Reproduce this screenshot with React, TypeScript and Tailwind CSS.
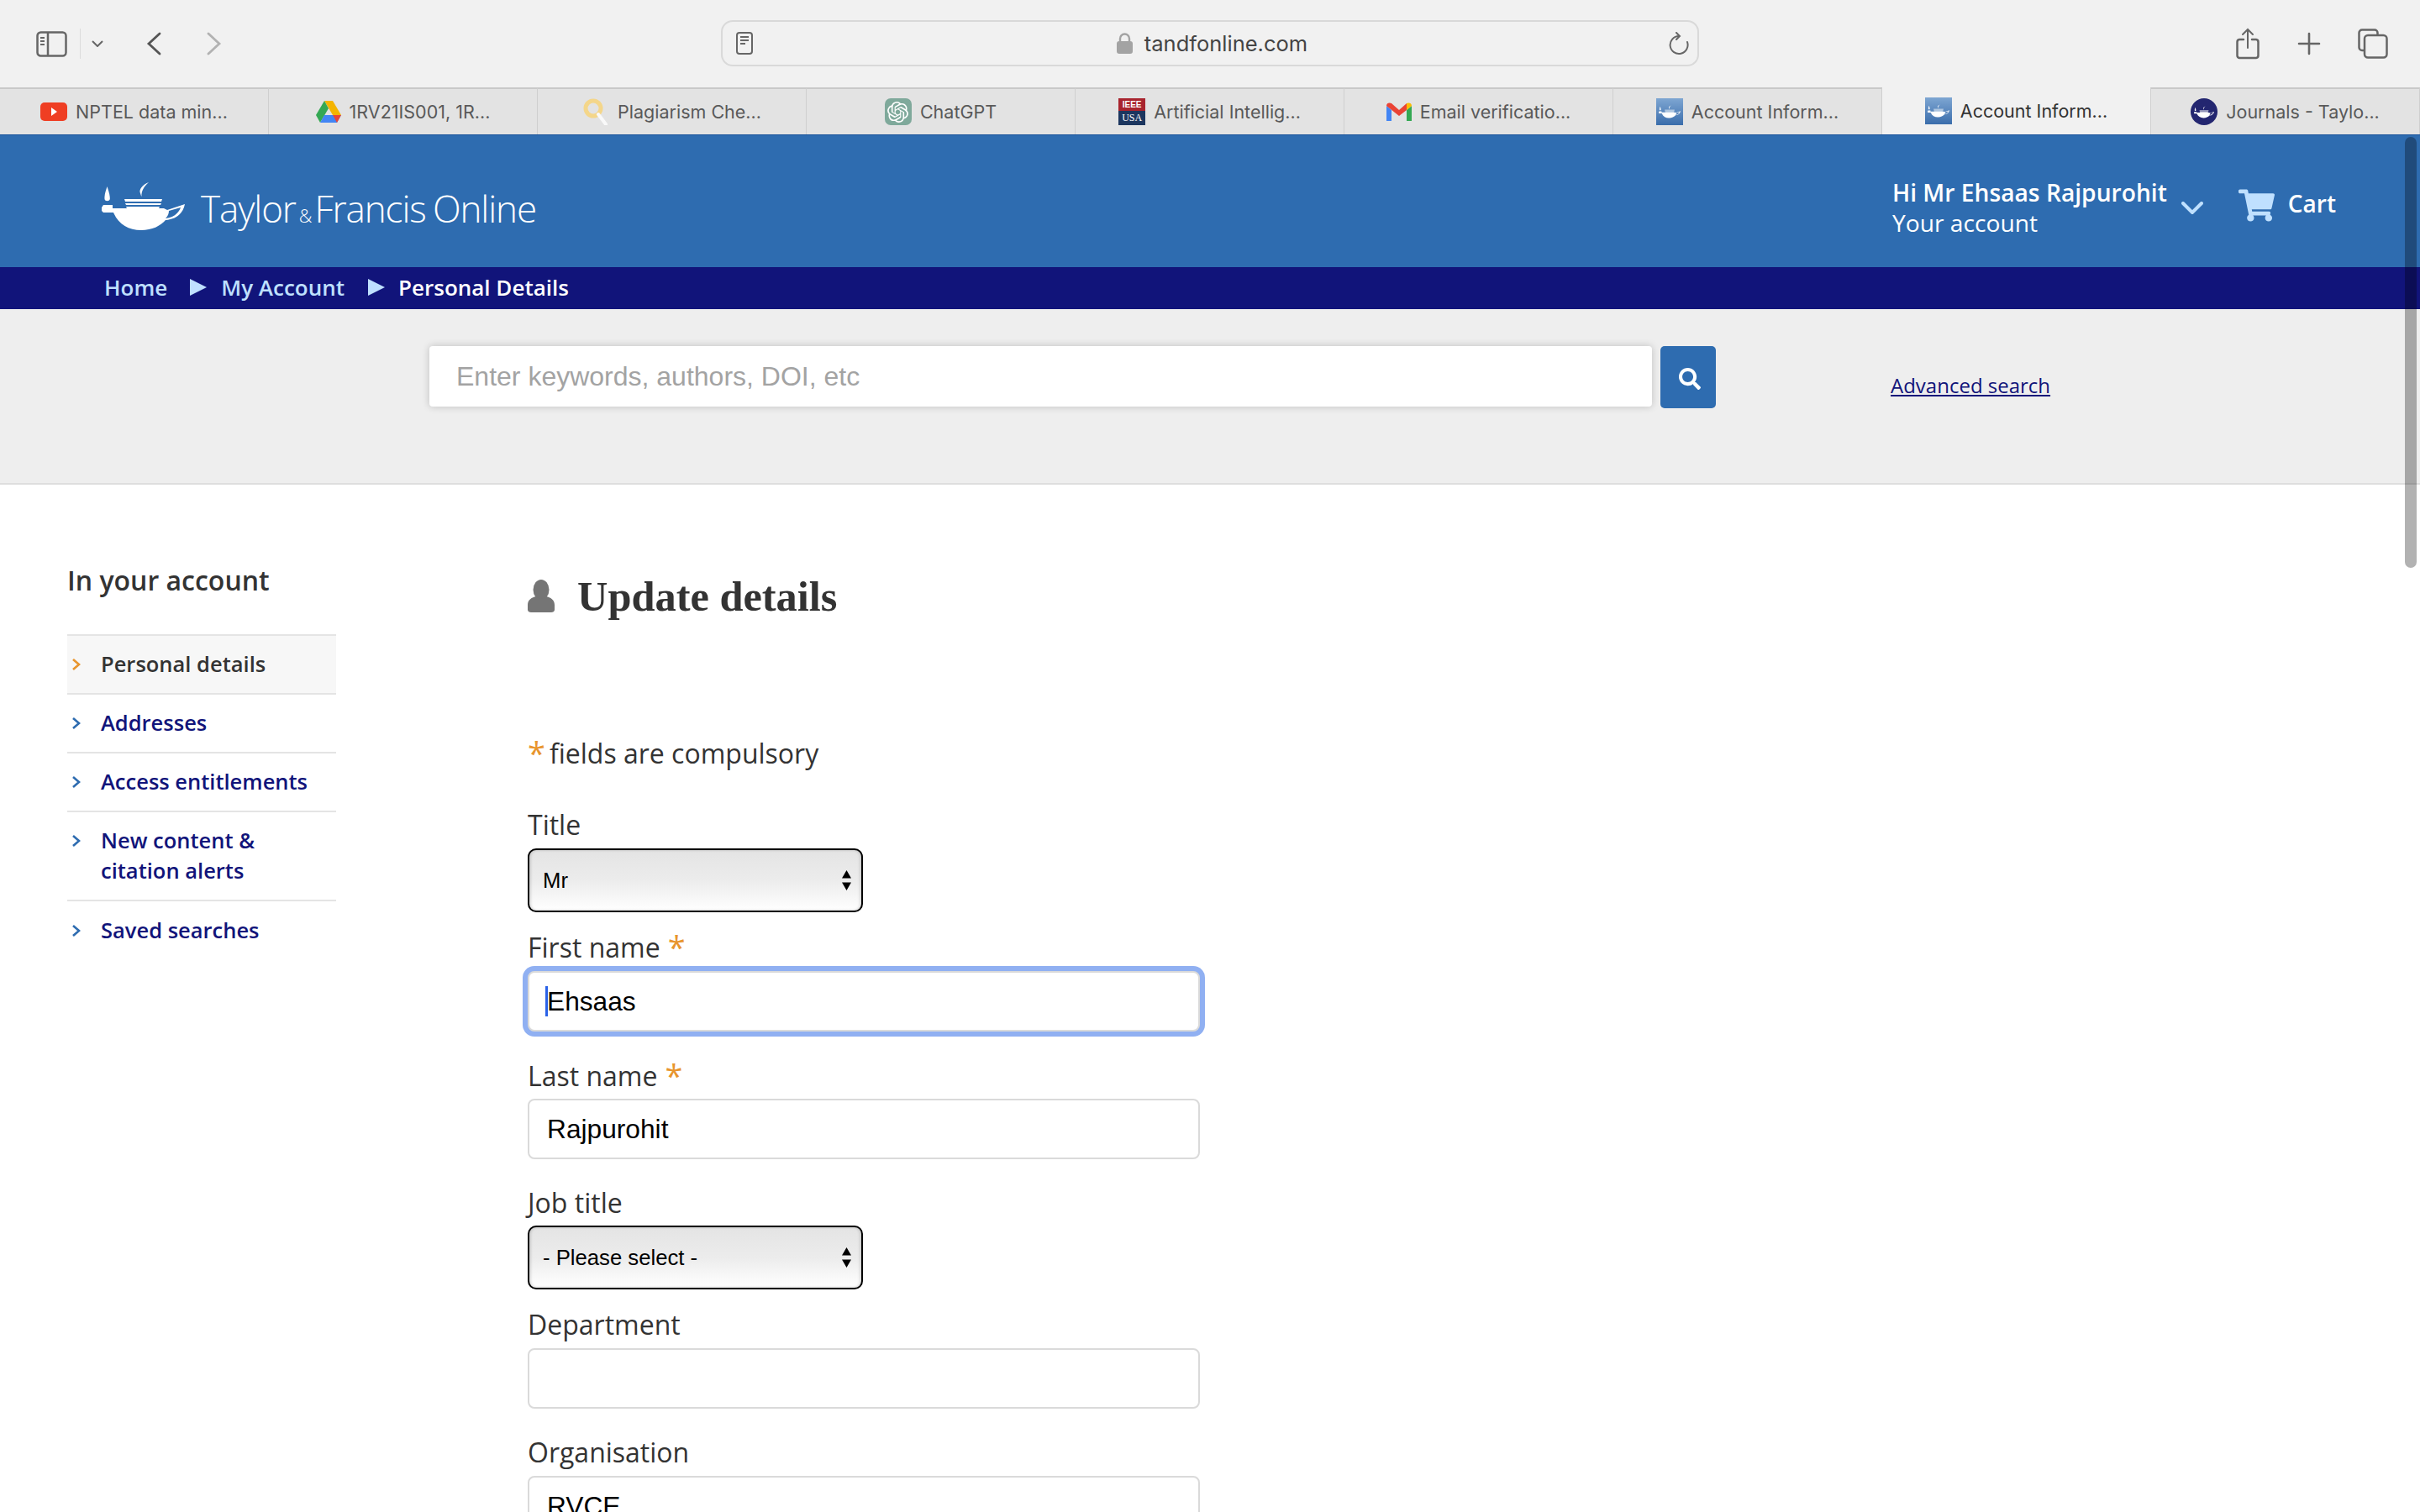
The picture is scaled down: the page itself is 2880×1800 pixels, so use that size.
import { FaSearch, FaShoppingCart } from "react-icons/fa";
import { SiOpenai } from "react-icons/si";

const sans = "font-['Open_Sans',sans-serif]";

function Lamp({ className }: { className?: string }) {
  return (
    <svg viewBox="0 0 99 57" className={className} fill="currentColor">
      <path d="M6.5 5C4 12 3 17 3.5 20C4 23 9 23 9.8 20C10 17 9 12 6.5 5Z" />
      <path d="M56 0C48 3 44 9 46 13C46.5 15 47 16 47.5 17C47 11 50 5 56 0Z" />
      <path d="M27 20H72L71 23H28ZM28 25H71L70 27H29ZM29 29H69L68 31H30Z" />
      <path
        fillRule="evenodd"
        d="M0 30L2 27H13V31H74L78 33L99 26C97 36 90 44 76 45C70 52 60 57 47 57C32 57 20 50 14 36H2L0 34ZM80 34L94 30C92 36 86 42 76 43C79 40 80 37 80 34Z"
      />
    </svg>
  );
}

function TfFavicon() {
  return (
    <div className="w-[32px] h-[32px] flex items-center justify-center bg-gradient-to-b from-[#7ea6d2] to-[#3a6dab] text-white">
      <Lamp className="w-[26px] h-[16px]" />
    </div>
  );
}

function Youtube() {
  return (
    <div className="w-[32px] h-[22px] rounded-[5px] bg-[#ef3e23] flex items-center justify-center">
      <div className="w-0 h-0 border-y-[5px] border-y-transparent border-l-[7px] border-l-white" />
    </div>
  );
}

function Drive() {
  return (
    <svg viewBox="0 0 30 26" className="w-[30px] h-[26px]">
      <path d="M10 0H20L30 17H20Z" fill="#f4b400" />
      <path d="M10 0L15 9L5 26L0 17Z" fill="#34a853" />
      <path d="M5 26L10 17H30L25 26Z" fill="#4285f4" />
      <path d="M25 26L20 17H30Z" fill="#ea4335" />
    </svg>
  );
}

function Plagiarism() {
  return (
    <svg viewBox="0 0 32 32" className="w-[32px] h-[32px]" fill="none">
      <circle cx="13" cy="12" r="9" stroke="#f4d68a" strokeWidth="5" />
      <path d="M19 19L28 31" stroke="#f9f9f9" strokeWidth="4" strokeLinecap="round" />
    </svg>
  );
}

function ChatGpt() {
  return (
    <div className="w-[32px] h-[32px] rounded-[7px] bg-[#7fa99b] flex items-center justify-center text-white">
      <SiOpenai size={25} />
    </div>
  );
}

function IeeeUsa() {
  return (
    <div className="w-[32px] h-[32px] flex flex-col font-['Liberation_Serif',serif] text-white text-[12px] leading-[16px] text-center">
      <div className="h-[15px] bg-[#a8242e] font-['Liberation_Sans',sans-serif] font-bold text-[10px] leading-[15px]">IEEE</div>
      <div className="h-[17px] bg-[#1c365f] leading-[17px]">USA</div>
    </div>
  );
}

function Gmail() {
  return (
    <svg viewBox="0 0 30 22" className="w-[30px] h-[22px]">
      <path d="M0 4V22H6V9Z" fill="#4285f4" />
      <path d="M30 4V22H24V9Z" fill="#34a853" />
      <path d="M0 4C0 0 4 0 6 1L15 9L24 1L24 9L15 16L0 4Z" fill="#ea4335" />
      <path d="M24 1C26 0 30 0 30 4L24 9Z" fill="#fbbc04" />
    </svg>
  );
}

function JournalsIcon() {
  return (
    <div className="w-[32px] h-[32px] rounded-full bg-[#232670] flex items-center justify-center text-white">
      <Lamp className="w-[24px] h-[15px]" />
    </div>
  );
}

const tabs = [
  { title: "NPTEL data min...", icon: <Youtube /> },
  { title: "1RV21IS001, 1R...", icon: <Drive /> },
  { title: "Plagiarism Che...", icon: <Plagiarism /> },
  { title: "ChatGPT", icon: <ChatGpt /> },
  { title: "Artificial Intellig...", icon: <IeeeUsa /> },
  { title: "Email verificatio...", icon: <Gmail /> },
  { title: "Account Inform...", icon: <TfFavicon /> },
  { title: "Account Inform...", icon: <TfFavicon />, active: true },
  { title: "Journals - Taylo...", icon: <JournalsIcon /> },
];

function Toolbar() {
  return (
    <div className="h-[104px] bg-[#f1f1f1] flex items-center text-[#666]">
      <div className="w-[858px] flex items-center pl-[43px]">
        <svg viewBox="0 0 37 31" className="w-[37px] h-[31px]" fill="none" stroke="currentColor" strokeWidth="2.5">
          <rect x="1.5" y="1.5" width="34" height="28" rx="4" />
          <path d="M14 2V29" />
          <path d="M5 8H10M5 12H10M5 16H10" strokeWidth="2" />
        </svg>
        <div className="w-px h-[36px] bg-[#dcdcdc] ml-[15px]" />
        <svg viewBox="0 0 14 8" className="w-[14px] h-[8px] ml-[13px]" fill="none" stroke="currentColor" strokeWidth="2">
          <path d="M1 1L7 7L13 1" />
        </svg>
        <svg viewBox="0 0 18 28" className="w-[18px] h-[28px] ml-[51px]" fill="none" stroke="#555" strokeWidth="2.8" strokeLinecap="round">
          <path d="M16 2L3 14L16 26" />
        </svg>
        <svg viewBox="0 0 18 28" className="w-[18px] h-[28px] ml-[54px]" fill="none" stroke="#b2b2b2" strokeWidth="2.8" strokeLinecap="round">
          <path d="M2 2L15 14L2 26" />
        </svg>
      </div>
      <div className="w-[1164px] h-[55px] -mt-[1px] border-2 border-[#d9d9d9] rounded-[14px] flex items-center pl-[16px] pr-[10px]">
        <svg viewBox="0 0 20 27" className="w-[20px] h-[27px]" fill="none" stroke="currentColor" strokeWidth="2">
          <rect x="1" y="1" width="18" height="25" rx="3" />
          <path d="M5 6H15M5 10H15M5 14H11" strokeWidth="1.8" />
        </svg>
        <div className="flex-1 flex items-center justify-center pl-[3px]">
          <svg viewBox="0 0 19 25" className="w-[19px] h-[25px]">
            <path d="M4 11V7A5.5 5.5 0 0 1 15 7V11" fill="none" stroke="#a3a3a3" strokeWidth="2.4" />
            <rect x="0" y="10" width="19" height="15" rx="3" fill="#a3a3a3" />
          </svg>
          <span className="ml-[14px] font-['Inter',sans-serif] text-[25.5px] leading-[32px] text-[#444]">tandfonline.com</span>
        </div>
        <svg viewBox="0 0 24 28" className="w-[24px] h-[28px]" fill="none" stroke="currentColor" strokeWidth="2" strokeLinecap="round">
          <path d="M12 5A10.5 10.5 0 1 0 22 12" />
          <path d="M9 1L13 5L9 9" />
        </svg>
      </div>
      <div className="flex-1 flex items-center pl-[639px]">
        <svg viewBox="0 0 28 38" className="w-[28px] h-[38px]" fill="none" stroke="currentColor" strokeWidth="2.5" strokeLinecap="round">
          <path d="M9 14H4A3 3 0 0 0 1.5 17V33A3 3 0 0 0 4 36H24A3 3 0 0 0 26.5 33V17A3 3 0 0 0 24 14H19" />
          <path d="M14 24V2M8 8L14 2L20 8" strokeWidth="2" />
        </svg>
        <svg viewBox="0 0 28 28" className="w-[28px] h-[28px] ml-[45px]" fill="none" stroke="currentColor" strokeWidth="2.6" strokeLinecap="round">
          <path d="M14 2V26M2 14H26" />
        </svg>
        <svg viewBox="0 0 36 36" className="w-[36px] h-[36px] ml-[44px]" fill="none" stroke="currentColor" strokeWidth="2.5">
          <path d="M7 26H5A3.5 3.5 0 0 1 1.5 22.500V5A3.500 3.500 0 0 1 5 1.500H20A3.500 3.500 0 0 1 23.500 5V7" />
          <rect x="8" y="8" width="26.500" height="26.500" rx="4" />
        </svg>
      </div>
    </div>
  );
}

function TabBar() {
  return (
    <div className="h-[56px] flex bg-[#e3e3e3] font-['Inter',sans-serif] text-[21.500px]">
      {tabs.map((tab, i) => (
        <div
          key={i}
          className={
            tab.active
              ? "w-[320px] flex items-center justify-center gap-[10px] bg-[#f1f1f1] text-[#333] border-r border-[#cfcfcf]"
              : "w-[320px] flex items-center justify-center gap-[10px] text-[#595959] border-r border-[#cfcfcf] border-t-2 border-t-[#c9c9c9]"
          }
        >
          <div className="shrink-0">{tab.icon}</div>
          <span className="whitespace-nowrap">{tab.title}</span>
        </div>
      ))}
    </div>
  );
}

function Header() {
  return (
    <div className={`h-[158px] bg-[#2e6cb0] border-t border-[#17519a] flex items-center ${sans}`}>
      <div className="ml-[121px] flex items-center text-white">
        <Lamp className="w-[99px] h-[57px] mt-[11px]" />
        <div className="ml-[19px] mt-[25px] font-light text-[44px] leading-[50px] tracking-[-1.100px] [word-spacing:-2px] whitespace-nowrap">
          Taylor<span className="text-[22px] mx-[4px]">&amp;</span>Francis Online
        </div>
      </div>
      <div className="ml-auto flex items-center mr-[100px]">
        <div className="text-white mt-[14px]">
          <div className="text-[28.200px] leading-[36px] font-semibold">Hi Mr Ehsaas Rajpurohit</div>
          <div className="text-[28.200px] leading-[36px]">Your account</div>
        </div>
        <svg viewBox="0 0 26 15" className="w-[26px] h-[15px] ml-[17px] mt-[16px]" fill="none" stroke="#bfe0ff" strokeWidth="4" strokeLinecap="round">
          <path d="M2 2L13 13L24 2" />
        </svg>
        <FaShoppingCart size={43} className="ml-[42px] mt-[10px] text-[#bfe0ff]" />
        <div className="ml-[16px] mt-[4px] text-white text-[28px] font-semibold">Cart</div>
      </div>
    </div>
  );
}

function Crumbs() {
  return (
    <div className={`h-[50px] bg-[#11147a] flex items-center pl-[124px] pb-[2px] text-[26px] font-semibold ${sans}`}>
      <span className="text-[#bfe0ff]">Home</span>
      <div className="w-0 h-0 ml-[27px] border-y-[10px] border-y-transparent border-l-[20px] border-l-[#bfe0ff]" />
      <span className="ml-[17px] text-[#bfe0ff]">My Account</span>
      <div className="w-0 h-0 ml-[28px] border-y-[10px] border-y-transparent border-l-[20px] border-l-[#bfe0ff]" />
      <span className="ml-[16px] text-white">Personal Details</span>
    </div>
  );
}

function SearchBand() {
  return (
    <div className="h-[209px] bg-[#eeeeee] border-b-2 border-[#dedede] flex items-start pt-[44px] pl-[511px]">
      <div className="w-[1455px] h-[72px] pb-[1px] bg-white rounded-[4px] shadow-[0_0_10px_rgba(0,0,0,0.2)] flex items-center pl-[32px] font-['Liberation_Sans',sans-serif] text-[32px] text-[#a3a3a3]">
        Enter keywords, authors, DOI, etc
      </div>
      <div className="w-[66px] h-[74px] ml-[10px] rounded-[5px] bg-[#2e6cb0] flex items-center justify-center pl-[3px] pt-[3px] text-white">
        <FaSearch size={26} />
      </div>
      <a className={`ml-[208px] mt-[29px] text-[#11147a] underline text-[24px] leading-[36px] ${sans}`}>Advanced search</a>
    </div>
  );
}

const sideLinks = ["Addresses", "Access entitlements", "New content & citation alerts", "Saved searches"];

function Sidebar() {
  return (
    <div className={`w-[320px] ml-[80px] shrink-0 ${sans}`}>
      <h2 className="mt-[94px] mb-[44px] text-[32px] leading-[40px] font-semibold text-[#333] whitespace-nowrap">In your account</h2>
      <ul className="border-t-2 border-[#e4e4e4]">
        <li className="h-[70px] pb-[2px] bg-[#f7f7f7] border-b-2 border-[#e4e4e4] flex items-center text-[25.500px] font-semibold text-[#333]">
          <svg viewBox="0 0 11 16" className="w-[11px] h-[16px] ml-[5px] mr-[24px] mt-[2px]" fill="none" stroke="#e8952e" strokeWidth="2.6">
            <path d="M2 2L9 8L2 14" />
          </svg>
          Personal details
        </li>
        {sideLinks.map((label) => (
          <li key={label} className="min-h-[70px] pt-[15px] pb-[17px] border-b-2 border-[#e4e4e4] last:border-b-0 flex items-center text-[25.500px] leading-[36px] font-semibold text-[#11147a]">
            <svg viewBox="0 0 11 16" className={label.startsWith("New") ? "w-[11px] h-[16px] ml-[5px] mr-[24px] self-start mt-[11px] shrink-0" : "w-[11px] h-[16px] ml-[5px] mr-[24px] mt-[2px] shrink-0"} fill="none" stroke="#2e6cb0" strokeWidth="2.6">
              <path d="M2 2L9 8L2 14" />
            </svg>
            <span className={label.startsWith("New") ? "w-[220px]" : "whitespace-nowrap"}>{label}</span>
          </li>
        ))}
      </ul>
    </div>
  );
}

function Star() {
  return <span className="text-[#e8952e] ml-[9px] text-[38px] leading-[0] relative top-[2px]">*</span>;
}

function SelectBox({ value }: { value: string }) {
  return (
    <div className="relative w-[399px] h-[76px]">
      <select
        defaultValue={value}
        className="w-full h-full appearance-none border-2 border-black rounded-[10px] bg-gradient-to-b from-[#e4e4e4] via-[#ececec] to-white shadow-[inset_2px_0_3px_rgba(0,0,0,0.12),inset_-2px_0_3px_rgba(0,0,0,0.12)] pl-[16px] font-['Liberation_Sans',sans-serif] text-[25.700px] text-black"
      >
        <option>{value}</option>
      </select>
      <svg viewBox="0 0 13 24" className="absolute right-[13px] top-[26px] w-[13px] h-[24px] pointer-events-none">
        <path d="M6.500 0L12 9.500H1ZM6.500 24L1 14.500H12Z" />
      </svg>
    </div>
  );
}

const inputCls =
  "block w-[800px] h-[72px] border-2 border-[#dadada] rounded-[8px] bg-white pl-[21px] pr-[22px] font-['Liberation_Sans',sans-serif] text-[31.700px] text-black outline-none";

function Form() {
  return (
    <div className={`ml-[228px] text-[32px] leading-[36px] text-[#333] ${sans}`}>
      <div className="mt-[105px] flex items-center">
        <svg viewBox="0 0 32 40" className="w-[32px] h-[40px]" fill="#757575">
          <ellipse cx="16" cy="12" rx="9.500" ry="12" />
          <path d="M0 30C0 24 5 21 10 20C12 23 20 23 22 20C27 21 32 24 32 30V36C32 38 30 39 28 39H4C2 39 0 38 0 36Z" />
        </svg>
        <h1 className="ml-[27px] font-['Liberation_Serif',serif] font-bold text-[50.400px] leading-[56px] text-[#333] whitespace-nowrap">Update details</h1>
      </div>
      <p className="mt-[141px]">
        <span className="text-[#e8952e] mr-[5px] text-[38px] leading-[0] relative top-[2px]">*</span>fields are compulsory
      </p>
      <label className="block mt-[49px] mb-[10px]">Title</label>
      <SelectBox value="Mr" />
      <label className="block mt-[24px] mb-[10px]">First name<Star /></label>
      <div className="relative w-[800px]">
        <input readOnly value="Ehsaas" className={`${inputCls} shadow-[0_0_0_6px_#90b0f2]`} />
        <div className="absolute left-[21px] top-[18px] w-[3px] h-[36px] bg-[#2a62e8]" />
      </div>
      <label className="block mt-[35px] mb-[9px]">Last name<Star /></label>
      <input readOnly value="Rajpurohit" className={inputCls} />
      <label className="block mt-[34px] mb-[9px]">Job title</label>
      <SelectBox value="- Please select -" />
      <label className="block mt-[24px] mb-[10px]">Department</label>
      <input readOnly value="" className={inputCls} />
      <label className="block mt-[34px] mb-[10px]">Organisation</label>
      <input readOnly value="RVCE" className={inputCls} />
    </div>
  );
}

export default function App() {
  return (
    <div className="relative w-[2880px] h-[1800px] overflow-hidden bg-white">
      <Toolbar />
      <TabBar />
      <Header />
      <Crumbs />
      <SearchBand />
      <div className="flex">
        <Sidebar />
        <Form />
      </div>
      {/* overlay scrollbar */}
      <div className="absolute left-[2862px] top-[163px] w-[14px] h-[513px] rounded-full bg-black/30" />
    </div>
  );
}
